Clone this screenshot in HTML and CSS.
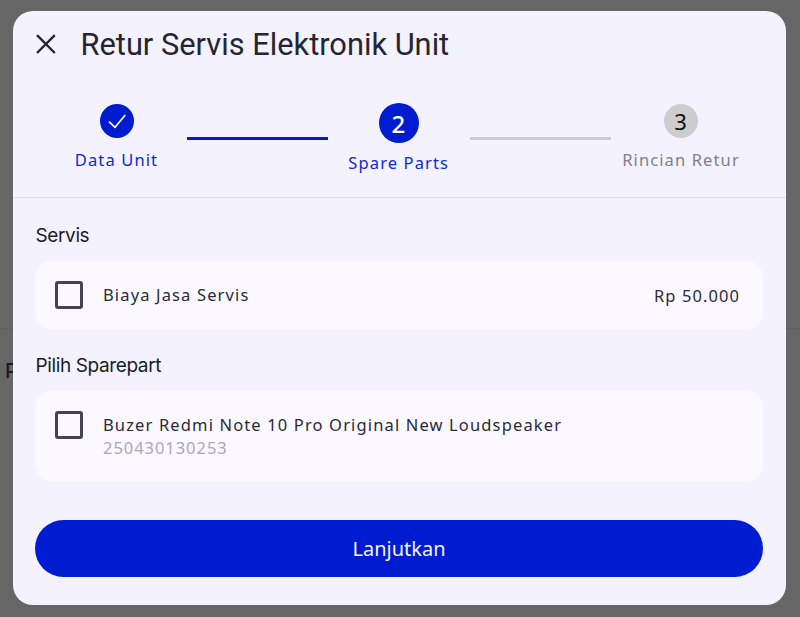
FILE: index.html
```html
<!DOCTYPE html>
<html lang="id">
<head>
<meta charset="utf-8">
<title>Retur Servis Elektronik Unit</title>
<link rel="stylesheet" href="styles.css">
</head>
<body>
<div class="backdrop-page">
  <div class="page-rule"></div>
  <div class="page-text">P</div>
</div>
<section class="modal">
  <header class="title-bar">
    <svg class="close" width="24" height="24" viewBox="0 0 24 24"><path d="M3 3.2 20.8 21M20.8 3.2 3 21" fill="none" stroke="#25252f" stroke-width="2.4"/></svg>
    <h1 class="title">Retur Servis Elektronik Unit</h1>
  </header>
  <div class="stepper">
    <div class="step step-first">
      <div class="dot dot-done"><svg width="18" height="18" viewBox="0 0 18 18"><path d="M1 9.7 7 15.3 17.3 3" fill="none" stroke="#fff" stroke-width="1.6"/></svg></div>
      <div class="step-label active">Data Unit</div>
    </div>
    <div class="connector connector-on"></div>
    <div class="step step-mid">
      <div class="dot dot-current">2</div>
      <div class="step-label active">Spare Parts</div>
    </div>
    <div class="connector connector-off"></div>
    <div class="step step-last">
      <div class="dot dot-todo">3</div>
      <div class="step-label muted">Rincian Retur</div>
    </div>
  </div>
  <div class="content">
    <h2 class="section-title">Servis</h2>
    <div class="card card-service">
      <span class="check"></span>
      <span class="item-name">Biaya Jasa Servis</span>
      <span class="price">Rp 50.000</span>
    </div>
    <h2 class="section-title section-second">Pilih Sparepart</h2>
    <div class="card card-part">
      <span class="check"></span>
      <div class="item-text">
        <div class="item-name">Buzer Redmi Note 10 Pro Original New Loudspeaker</div>
        <div class="item-code">250430130253</div>
      </div>
    </div>
    <button class="primary" type="button">Lanjutkan</button>
  </div>
</section>
</body>
</html>
```

FILE: styles.css
```css
* { box-sizing: border-box; }
html, body { margin: 0; height: 617px; overflow: hidden; }
body { background: #666667; font-family: "Noto Sans", sans-serif; position: relative; }
.backdrop-page { padding-top: 328px; }
.page-rule { height: 1px; background: #5f5f61; }
.page-text { margin: 30px 0 0 5px; font: 500 20px/24px "Inter", sans-serif; color: #1c1c1f; }
.modal {
  position: absolute; left: 12.5px; top: 11px; width: 773.5px; height: 594px;
  background: #f4f2ff; border-radius: 20px;
}
.title-bar { display: flex; align-items: center; height: 66px; padding-left: 21.5px; }
.close { flex: none; }
.title { margin: 0 0 0 22.5px; font: 400 30.8px/36px "Roboto", sans-serif; color: #25252f; position: relative; top: 1px; }
.stepper { display: flex; align-items: flex-start; height: 121px; border-bottom: 1px solid #dfdde6; padding-top: 26px; }
.step { display: flex; flex-direction: column; align-items: center; flex: none; }
.step-first { width: 174.5px; padding-left: 33.5px; margin-top: 1px; }
.step-mid { width: 141.5px; }
.step-last { width: 141px; margin-top: 1px; }
.dot { display: flex; align-items: center; justify-content: center; border-radius: 50%; }
.dot-done { width: 34px; height: 34px; background: #001cd0; }
.dot-current { width: 40px; height: 40px; background: #001cd0; color: #fff; font-size: 24px; font-weight: 500; padding-right: 1px; }
.dot-todo { width: 34px; height: 34px; background: #cdcdcd; color: #111; font-size: 22px; padding-right: 1px; }
.step-label { font-size: 16.5px; line-height: 22px; letter-spacing: 1.12px; white-space: nowrap; margin-top: 11px; }
.step-mid .step-label { margin-top: 9px; }
.active { color: #0a2ad6; }
.muted { color: #7f7f8c; }
.connector { flex: none; width: 141px; height: 3px; margin-top: 34px; }
.connector-on { background: #001cd0; }
.connector-off { background: #cdcdcf; }
.content { padding: 0 23px 0 22.5px; }
.section-title { margin: 0; font: 400 19px/22px "Inter", sans-serif; letter-spacing: -0.38px; color: #1b1b26; padding: 27px 0 0 0.5px; }
.section-second { padding-top: 26px; }
.card { display: flex; background: #fbf9ff; border-radius: 16px; }
.card-service { height: 68px; align-items: center; padding: 0 23px 0 20px; margin-top: 14px; }
.card-part { height: 90px; padding: 20px 20px 0 20px; margin-top: 14px; }
.check { flex: none; width: 28px; height: 28px; border: 3px solid #444455; border-radius: 3px; }
.item-name { font-size: 16.5px; line-height: 22px; letter-spacing: 1.14px; color: #2a2a38; margin-left: 20px; }
.item-text { padding-top: 3px; }
.item-text .item-name { white-space: nowrap; }
.item-code { font-size: 16.5px; line-height: 22px; letter-spacing: 0.95px; color: #a9a9b3; margin: 1px 0 0 20px; }
.price { margin-left: auto; font-size: 16.5px; letter-spacing: 1.08px; color: #2a2a38; }
.primary {
  display: block; width: 100%; height: 57px; margin-top: 39px; border: 0; border-radius: 28.5px;
  background: #001cd0; color: #f4f2ff; font: 400 20px/24px "Noto Sans", sans-serif;
}
```
